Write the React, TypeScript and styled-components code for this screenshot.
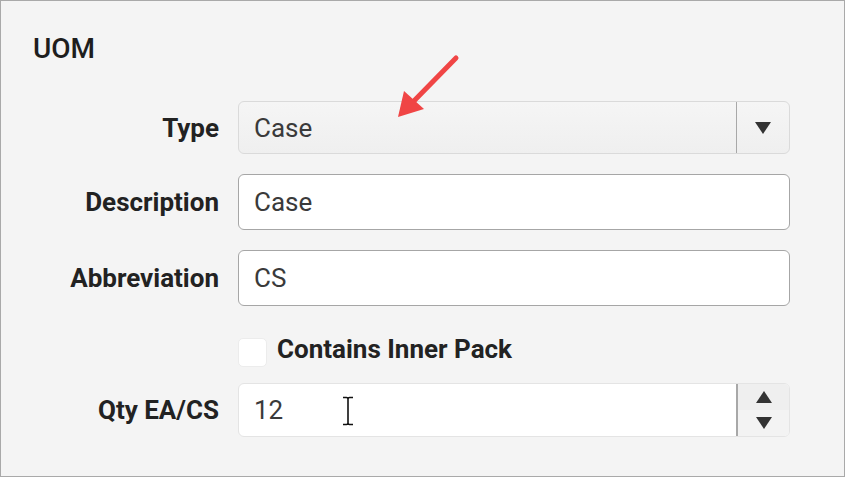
import React from 'react';
import styled, { createGlobalStyle } from 'styled-components';

const GlobalStyle = createGlobalStyle`
    html, body {
        margin: 0;
        padding: 0;
        background: #ffffff;
    }
    * {
        box-sizing: border-box;
    }
`;

const Frame = styled.div`
    position: relative;
    width: 845px;
    height: 477px;
    border: 1px solid #a9a9a9;
    background: #f4f4f4;
    font-family: Roboto, 'Liberation Sans', sans-serif;
    color: #222;
    padding: 31px 0 0 32px;
`;

const Title = styled.h2`
    margin: 0;
    font-size: 28px;
    font-weight: 500;
    line-height: 34px;
    color: #1e1e1e;
`;

const Form = styled.div`
    display: flex;
    flex-direction: column;
    gap: 20px;
    margin-top: 35px;
`;

const Row = styled.div<{ $height: number; $offset?: number }>`
    display: grid;
    grid-template-columns: 186px 552px;
    column-gap: 19px;
    align-items: center;
    height: ${(p) => p.$height}px;
    margin-top: ${(p) => p.$offset ?? 0}px;
`;

const Label = styled.label`
    text-align: right;
    font-size: 26px;
    font-weight: 700;
    color: #222;
`;

const FieldBox = styled.div<{ $variant: 'select' | 'text' | 'number' }>`
    display: flex;
    height: 100%;
    border-radius: 6px;
    overflow: hidden;
    border: 1px solid
        ${(p) => (p.$variant === 'text' ? '#a6a6a6' : p.$variant === 'select' ? '#dadada' : '#e4e4e4')};
    background: ${(p) =>
        p.$variant === 'select' ? 'linear-gradient(#f5f5f5, #efefef)' : '#ffffff'};
`;

const Value = styled.div`
    flex: 1;
    display: flex;
    align-items: center;
    padding-left: 15px;
    font-size: 26px;
    color: #3a3a3a;
`;

const SelectButton = styled.div`
    width: 53px;
    border-left: 1px solid #a8a8a8;
    display: flex;
    align-items: center;
    justify-content: center;
`;

const Spinner = styled.div`
    width: 53px;
    border-left: 2px solid #a8a8a8;
    display: flex;
    flex-direction: column;
    background: #f4f4f4;
`;

const SpinHalf = styled.div<{ $top?: boolean }>`
    flex: 1;
    display: flex;
    align-items: center;
    justify-content: center;
    background: ${(p) => (p.$top ? '#efefef' : '#f3f3f3')};
`;

const CheckRow = styled.div`
    display: flex;
    align-items: center;
    gap: 10px;
    grid-column: 2;
`;

const Checkbox = styled.span`
    width: 29px;
    height: 29px;
    border-radius: 5px;
    background: #ffffff;
    border: 1px solid #ececec;
`;

const CheckLabel = styled.span`
    font-size: 26px;
    font-weight: 700;
    color: #222;
    margin-bottom: 7px;
`;

const Arrow = styled.svg`
    position: absolute;
    left: 390px;
    top: 50px;
`;

const Cursor = styled.svg`
    position: absolute;
    left: 340px;
    top: 395px;
`;

const Triangle: React.FC<{ up?: boolean }> = ({ up }) => (
    <svg width="16" height="12" viewBox="0 0 16 12">
        <path d={up ? 'M8 0 L16 12 L0 12 Z' : 'M0 0 L16 0 L8 12 Z'} fill="#333" />
    </svg>
);

const App: React.FC = () => {
    return (
        <>
            <GlobalStyle />
            <Frame>
                <Title>UOM</Title>
                <Form>
                    <Row $height={53}>
                        <Label>Type</Label>
                        <FieldBox $variant="select">
                            <Value>Case</Value>
                            <SelectButton>
                                <Triangle />
                            </SelectButton>
                        </FieldBox>
                    </Row>
                    <Row $height={56}>
                        <Label>Description</Label>
                        <FieldBox $variant="text">
                            <Value>Case</Value>
                        </FieldBox>
                    </Row>
                    <Row $height={56}>
                        <Label>Abbreviation</Label>
                        <FieldBox $variant="text">
                            <Value>CS</Value>
                        </FieldBox>
                    </Row>
                    <Row $height={29} $offset={8}>
                        <CheckRow>
                            <Checkbox />
                            <CheckLabel>Contains Inner Pack</CheckLabel>
                        </CheckRow>
                    </Row>
                    <Row $height={54}>
                        <Label>Qty EA/CS</Label>
                        <FieldBox $variant="number">
                            <Value>12</Value>
                            <Spinner>
                                <SpinHalf $top>
                                    <Triangle up />
                                </SpinHalf>
                                <SpinHalf>
                                    <Triangle />
                                </SpinHalf>
                            </Spinner>
                        </FieldBox>
                    </Row>
                </Form>
                <Arrow width="72" height="72" viewBox="0 0 72 72">
                    <line x1="65" y1="7" x2="18" y2="55" stroke="#f04545" strokeWidth="5" strokeLinecap="round" />
                    <path d="M7 66 L13 40 L33 58 Z" fill="#f04545" />
                </Arrow>
                <Cursor width="14" height="30" viewBox="0 0 14 30">
                    <path d="M2 1.5 H5.5 Q7 1.5 7 3 V27 Q7 28.5 5.5 28.5 H2 M12 1.5 H8.5 Q7 1.5 7 3 M7 27 Q7 28.5 8.5 28.5 H12" stroke="#111" strokeWidth="1.6" fill="none" />
                </Cursor>
            </Frame>
        </>
    );
};

export default App;
